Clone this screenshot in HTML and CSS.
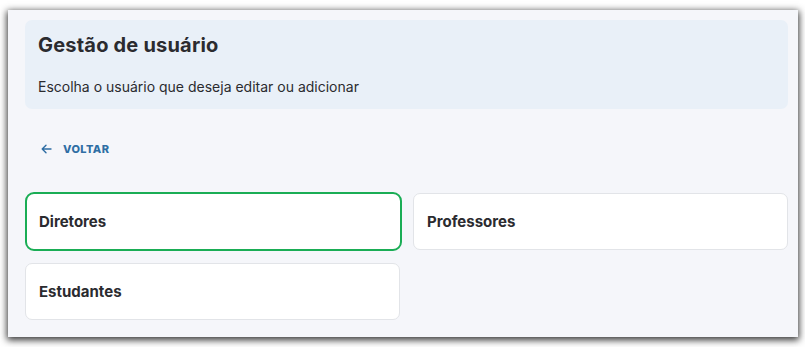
FILE: index.html
```html
<!DOCTYPE html>
<html lang="pt-BR">
<head>
    <meta charset="UTF-8">
    <meta name="viewport" content="width=device-width, initial-scale=1.0">
    <title>Gestão de usuário</title>
    <link rel="stylesheet" href="styles.css">
</head>
<body>
    <div class="window">
        <div class="page-header">
            <h2>Gestão de usuário</h2>
            <p>Escolha o usuário que deseja editar ou adicionar</p>
        </div>
        <a class="back-link" href="#">
            <svg width="11" height="10" viewBox="0 0 11 10" fill="none" stroke="currentColor" stroke-width="1.4" stroke-linecap="round" stroke-linejoin="round">
                <path d="M10 5H1.2M5 1.2 1.2 5 5 8.8"/>
            </svg>
            <span>VOLTAR</span>
        </a>
        <div class="user-grid">
            <div class="user-card active">Diretores</div>
            <div class="user-card">Professores</div>
            <div class="user-card">Estudantes</div>
        </div>
    </div>
</body>
</html>
```

FILE: styles.css
```css
body {
    margin: 0;
    padding: 10px 7px 10px 8px;
    background-color: #fff;
    font-family: 'Inter', 'Noto Sans', sans-serif;
    color: #2b2b2f;
}
.window {
    height: 327px;
    box-sizing: border-box;
    padding: 10px 10px 0 17px;
    background-color: #f5f6fa;
    box-shadow: 0 2px 7px 1px rgba(0, 0, 0, 0.8);
}
.page-header {
    height: 89px;
    box-sizing: border-box;
    padding: 12px 13px 0;
    background-color: #e9f0f8;
    border-radius: 7px;
}
.page-header h2 {
    margin: 0;
    font-size: 20px;
    font-weight: 700;
    line-height: 26px;
    letter-spacing: 0.2px;
    color: #2b2b2f;
}
.page-header p {
    margin: 20px 0 0;
    font-size: 14px;
    line-height: 18px;
    color: #2b2b2f;
}
.back-link {
    display: inline-flex;
    align-items: center;
    gap: 11px;
    margin: 33px 0 0 16px;
    color: #2f6ea4;
    text-decoration: none;
    font-size: 11px;
    font-weight: 800;
    line-height: 14px;
    letter-spacing: 0.4px;
}
.user-grid {
    display: grid;
    grid-template-columns: repeat(2, 375px);
    gap: 13px;
    margin-top: 35px;
}
.user-card {
    height: 57px;
    box-sizing: border-box;
    display: flex;
    align-items: center;
    padding: 0 13px;
    background: #fff;
    border: 1px solid #e2e4e8;
    border-radius: 7px;
    font-size: 15px;
    font-weight: 700;
    color: #2b2b2f;
}
.user-card.active {
    border: 2px solid #1aad55;
    border-radius: 9px;
    padding: 0 12px;
    margin: -1px 0 -1px 0;
    height: 59px;
    width: 377px;
}
```
